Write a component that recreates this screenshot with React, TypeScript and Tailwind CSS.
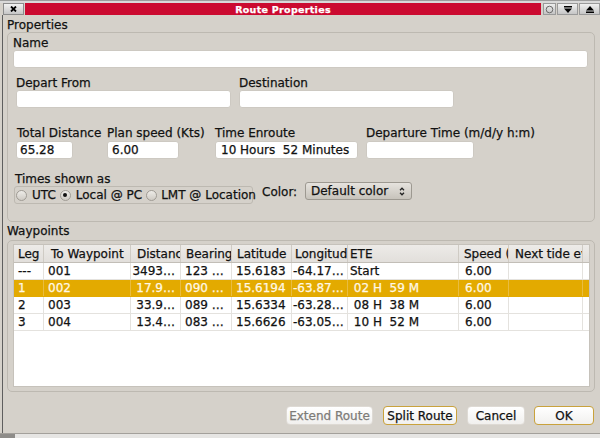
import React from 'react';

type Col = { label: string; w: string; head: string; cell: string };

const columns: Col[] = [
  { label: 'Leg', w: 'w-[30px]', head: 'pl-[4px]', cell: 'pl-[4px]' },
  { label: 'To Waypoint', w: 'w-[87px]', head: 'pl-[7px]', cell: 'pl-[4px]' },
  { label: 'Distance', w: 'w-[50px]', head: 'pl-[6px]', cell: 'justify-end pr-[5px]' },
  { label: 'Bearing', w: 'w-[51px]', head: 'pl-[5px]', cell: 'pl-[4px]' },
  { label: 'Latitude', w: 'w-[60px]', head: 'pl-[5px]', cell: 'pl-[4px]' },
  { label: 'Longitude', w: 'w-[56px]', head: 'pl-[3px]', cell: 'pl-[1px]' },
  { label: 'ETE', w: 'w-[111px]', head: 'pl-[2px]', cell: 'pl-[2px]' },
  { label: 'Speed (Kts)', w: 'w-[50px]', head: 'pl-[5px]', cell: 'pl-[6px]' },
  { label: 'Next tide event', w: 'w-[74px]', head: 'pl-[6px]', cell: 'pl-[6px]' },
];

const rows = [
  ['---', '001', '3493…', '123 …', '15.6183', '-64.17…', 'Start', '6.00', ''],
  ['1', '002', '17.9…', '090 …', '15.6194', '-63.87…', ' 02 H  59 M', '6.00', ''],
  ['2', '003', '33.9…', '089 …', '15.6334', '-63.28…', ' 08 H  38 M', '6.00', ''],
  ['3', '004', '13.4…', '083 …', '15.6626', '-63.05…', ' 10 H  52 M', '6.00', ''],
];

const Field = ({ value = '', className = '' }: { value?: string; className?: string }) => (
  <input
    type="text"
    readOnly
    defaultValue={value}
    className={`h-[18px] bg-white border border-[#cdc9c2] rounded-[3px] px-[3px] text-[12px] text-[#111] outline-none ${className}`}
  />
);

const Radio = ({ checked = false }: { checked?: boolean }) => (
  <span className="w-[11px] h-[11px] rounded-full border border-[#a09c95] bg-linear-to-b from-[#eeece8] to-[#cfcbc4] flex items-center justify-center shrink-0">
    {checked && <span className="w-[4px] h-[4px] rounded-full bg-[#111]" />}
  </span>
);

const Button = ({ label, focused = false, disabled = false, className = '' }: { label: string; focused?: boolean; disabled?: boolean; className?: string }) => (
  <button
    className={`h-[19px] rounded-[4px] border bg-linear-to-b from-[#ffffff] to-[#f1f0ee] text-[12px] leading-[14px] flex items-center justify-center whitespace-nowrap ${
      focused ? 'border-[#c9a23c]' : 'border-[#dedad4]'
    } ${disabled ? 'text-[#7d7b78]' : 'text-[#111]'} ${className}`}
  >
    {label}
  </button>
);

export default function App() {
  return (
    <div className="w-[600px] h-[438px] bg-[#d5d1ca] flex flex-col overflow-hidden text-[12px] leading-[14px] text-[#111] font-['DejaVu_Sans',sans-serif] [-webkit-text-stroke:0.25px_currentColor]">
      {/* title bar */}
      <div className="h-[3px] bg-[#d9d9d9] border-t border-[#9c9c9c]" />
      <div className="h-[12px] flex">
        <div className="ml-[3px] w-[21px] bg-linear-to-b from-[#f2f2f2] to-[#c6c6c6] border border-[#8c8c8c] flex items-center justify-center">
          <svg width="7" height="6" viewBox="0 0 7 6">
            <path d="M1 0.5 L6 5.5 M6 0.5 L1 5.5" stroke="#000" strokeWidth="1.8" />
          </svg>
        </div>
        <div className="ml-[1px] flex-1 bg-[#cb0a30] flex items-center justify-center">
          <span className="text-white font-bold text-[9.5px] leading-[11px] tracking-[0.3px]">Route Properties</span>
        </div>
        <div className="ml-[2px] w-[13px] bg-linear-to-b from-[#eeeeee] to-[#c4c4c4] border border-[#9a9a9a] flex items-center justify-center">
          <svg width="9" height="9" viewBox="0 0 9 9">
            <circle cx="4.5" cy="4.5" r="3.3" fill="none" stroke="#6a6a6a" strokeWidth="1" />
          </svg>
        </div>
        <div className="ml-[1px] w-[21px] bg-linear-to-b from-[#f0f0f0] to-[#c6c6c6] border border-[#9a9a9a] flex items-center justify-center">
          <svg width="8" height="7" viewBox="0 0 8 7">
            <rect x="0" y="0" width="8" height="1.5" fill="#000" />
            <path d="M0 2.5 L8 2.5 L4 7 Z" fill="#000" />
          </svg>
        </div>
        <div className="ml-[1px] w-[21px] bg-linear-to-b from-[#f0f0f0] to-[#c6c6c6] border border-[#9a9a9a] flex items-center justify-center">
          <svg width="8" height="7" viewBox="0 0 8 7">
            <path d="M0 4.5 L8 4.5 L4 0 Z" fill="#000" />
            <rect x="0" y="5.5" width="8" height="1.5" fill="#000" />
          </svg>
        </div>
      </div>

      {/* body */}
      <div className="flex-1 ml-[2px] border-l border-[#5e5e5e] flex flex-col">
        <div className="mt-[3px] h-[14px] pl-[4px]">Properties</div>
        <div className="ml-[4px] w-[588px] h-[190px] border border-[#bdb9b1] rounded-[5px] flex flex-col">
          <div className="mt-[3px] ml-[5px] h-[14px]">Name</div>
          <Field className="ml-[5px] w-[575px]" />

          <div className="mt-[8px] ml-[8px] flex">
            <div className="w-[223px] flex flex-col">
              <div className="h-[14px]">Depart From</div>
              <Field className="w-[215px]" />
            </div>
            <div className="flex flex-col">
              <div className="h-[14px]">Destination</div>
              <Field className="w-[215px]" />
            </div>
          </div>

          <div className="mt-[18px] ml-[8px] flex">
            <div className="w-[91px] flex flex-col">
              <div className="h-[14px] mb-[1px] pl-[1px] whitespace-nowrap">Total Distance</div>
              <Field value="65.28" className="w-[57px]" />
            </div>
            <div className="w-[108px] flex flex-col">
              <div className="h-[14px] mb-[1px] whitespace-nowrap">Plan speed (Kts)</div>
              <Field value="6.00" className="w-[72px] pl-[4px]" />
            </div>
            <div className="w-[151px] flex flex-col">
              <div className="h-[14px] mb-[1px] whitespace-nowrap">Time Enroute</div>
              <Field value="10 Hours  52 Minutes" className="w-[143px] pl-[5px] whitespace-pre" />
            </div>
            <div className="flex flex-col">
              <div className="h-[14px] mb-[1px] whitespace-nowrap">Departure Time (m/d/y h:m)</div>
              <Field className="w-[108px]" />
            </div>
          </div>

          <div className="mt-[14px] flex items-start">
            <div className="ml-[6px] w-[239px] shrink-0 flex flex-col">
              <div className="h-[13px] pl-[1px] leading-[13px]">Times shown as</div>
              <div className="h-[18px] border border-[#bdb9b1] rounded-[3px] flex items-center pl-[1px] gap-[4px] whitespace-nowrap">
                <div className="flex items-center gap-[5px] shrink-0">
                  <Radio />
                  <span>UTC</span>
                </div>
                <div className="flex items-center gap-[5px] shrink-0">
                  <Radio checked />
                  <span>Local @ PC</span>
                </div>
                <div className="flex items-center gap-[4px] shrink-0">
                  <Radio />
                  <span>LMT @ Location</span>
                </div>
              </div>
            </div>
            <div className="ml-[9px] mt-[12px] w-[43px] h-[14px] shrink-0">Color:</div>
            <div className="mt-[9px] w-[107px] h-[18px] shrink-0 rounded-[3px] border border-[#9d9991] bg-linear-to-b from-[#e6e3de] to-[#c7c3bb] flex items-center pl-[5px] pr-[6px] whitespace-nowrap">
              <span className="flex-1">Default color</span>
              <svg width="6" height="9" viewBox="0 0 6 9">
                <path d="M1 3.2 L3 1.2 L5 3.2 M1 5.8 L3 7.8 L5 5.8" fill="none" stroke="#222" strokeWidth="1.3" />
              </svg>
            </div>
          </div>
        </div>

        <div className="mt-[2px] h-[14px] pl-[4px]">Waypoints</div>
        <div className="mt-[2px] ml-[4px] w-[588px] h-[152px] border border-[#bdb9b1] rounded-[5px] flex flex-col">
          <div className="mt-[3px] ml-[5px] w-[577px] h-[143px] border border-[#c6c2bb] bg-white flex flex-col">
            <div className="h-[18px] flex bg-linear-to-b from-[#edebe8] to-[#e2dfdb] border-b border-[#c2beb7]">
              {columns.map((c) => (
                <div
                  key={c.label}
                  className={`${c.w} shrink-0 border-r border-[#cfcbc4] flex items-center overflow-hidden whitespace-nowrap ${c.head}`}
                >
                  {c.label}
                </div>
              ))}
              <div className="flex-1" />
            </div>
            {rows.map((r, i) => {
              const sel = i === 1;
              return (
                <div
                  key={i}
                  className={`h-[17px] flex border-b ${sel ? 'bg-[#e3aa00] text-[#fff8e6] border-[#e3aa00]' : 'border-[#e4e2de]'}`}
                >
                  {columns.map((c, j) => (
                    <div
                      key={c.label}
                      className={`${c.w} shrink-0 border-r flex items-center overflow-hidden whitespace-pre ${
                        sel ? 'border-[#e9bc40]' : 'border-[#e4e2de]'
                      } ${c.cell}`}
                    >
                      {r[j]}
                    </div>
                  ))}
                  <div className="flex-1" />
                </div>
              );
            })}
          </div>
        </div>

        <div className="mt-[14px] flex">
          <Button label="Extend Route" disabled className="ml-[283px] w-[87px]" />
          <Button label="Split Route" focused className="ml-[10px] w-[74px]" />
          <Button label="Cancel" className="ml-[10px] w-[58px]" />
          <Button label="OK" focused className="ml-[9px] w-[60px]" />
        </div>
      </div>

      <div className="h-[5px] flex border-t border-[#a3a09b]">
        <div className="w-[15px] bg-[#8e8c89]" />
        <div className="flex-1 bg-[#e6e5e3]" />
      </div>
    </div>
  );
}
